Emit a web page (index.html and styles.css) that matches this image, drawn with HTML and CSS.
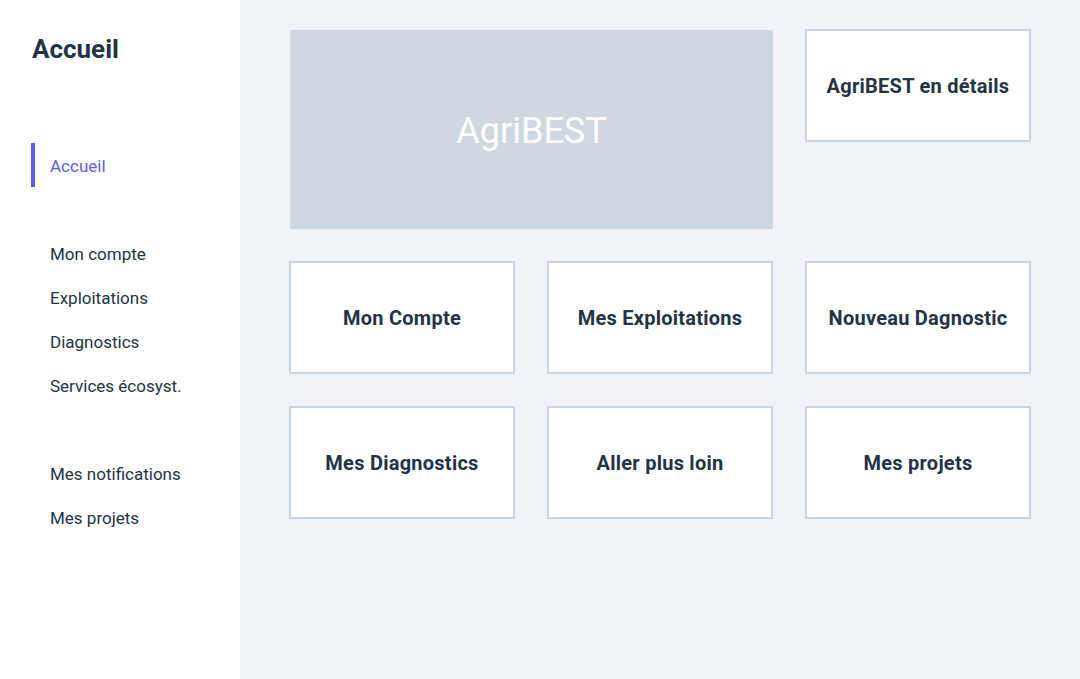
FILE: index.html
```html
<!DOCTYPE html>
<html lang="fr">
<head>
<meta charset="utf-8">
<title>Accueil</title>
<link rel="stylesheet" href="styles.css">
</head>
<body>
<div class="app">
  <aside class="sidebar">
    <h1 class="page-title">Accueil</h1>
    <nav class="nav">
      <a class="nav-item active" href="#">Accueil</a>
      <span class="nav-spacer"></span>
      <a class="nav-item" href="#">Mon compte</a>
      <a class="nav-item" href="#">Exploitations</a>
      <a class="nav-item" href="#">Diagnostics</a>
      <a class="nav-item" href="#">Services écosyst.</a>
      <span class="nav-spacer"></span>
      <a class="nav-item" href="#">Mes notifications</a>
      <a class="nav-item" href="#">Mes projets</a>
    </nav>
  </aside>
  <main class="main">
    <div class="grid">
      <div class="hero">AgriBEST</div>
      <a class="tile" href="#">AgriBEST en détails</a>
      <a class="tile" href="#">Mon Compte</a>
      <a class="tile" href="#">Mes Exploitations</a>
      <a class="tile" href="#">Nouveau Dagnostic</a>
      <a class="tile" href="#">Mes Diagnostics</a>
      <a class="tile" href="#">Aller plus loin</a>
      <a class="tile" href="#">Mes projets</a>
    </div>
  </main>
</div>
</body>
</html>
```

FILE: styles.css
```css
* { box-sizing: border-box; }
html, body { margin: 0; padding: 0; height: 100%; }
body {
  font-family: Roboto, "Liberation Sans", sans-serif;
  color: #243443;
  background: #eff3f7;
}
.app {
  display: flex;
  min-height: 679px;
}
.sidebar {
  width: 240px;
  flex: 0 0 240px;
  background: #ffffff;
  padding: 34px 0 0 31px;
}
.page-title {
  margin: 0;
  padding-left: 1px;
  font-size: 26px;
  font-weight: 700;
  line-height: 30px;
  color: #243443;
}
.nav {
  display: flex;
  flex-direction: column;
  margin-top: 79px;
}
.nav-item {
  display: block;
  height: 44px;
  padding-top: 3px;
  line-height: 41px;
  font-size: 17px;
  color: #243443;
  text-decoration: none;
  border-left: 4px solid transparent;
  padding-left: 15px;
}
.nav-item.active {
  color: #6259fe;
  border-left-color: #6259fe;
}
.nav-spacer { height: 44px; }
.main {
  flex: 1;
  padding: 29px 49px;
}
.grid {
  display: grid;
  grid-template-columns: repeat(3, 226px);
  grid-template-rows: 200px 113px 113px;
  gap: 32px;
}
.hero {
  grid-column: span 2;
  margin-left: 1px;
  margin-top: 1px;
  height: 199px;
  background: #cfd8e1;
  color: #ffffff;
  font-size: 36px;
  padding-top: 2px;
  display: flex;
  align-items: center;
  justify-content: center;
}
.tile {
  height: 113px;
  background: #ffffff;
  border: 2px solid #c9d4de;
  display: flex;
  align-items: center;
  justify-content: center;
  font-size: 20px;
  font-weight: 700;
  letter-spacing: 0.25px;
  color: #243443;
  text-decoration: none;
}
```
